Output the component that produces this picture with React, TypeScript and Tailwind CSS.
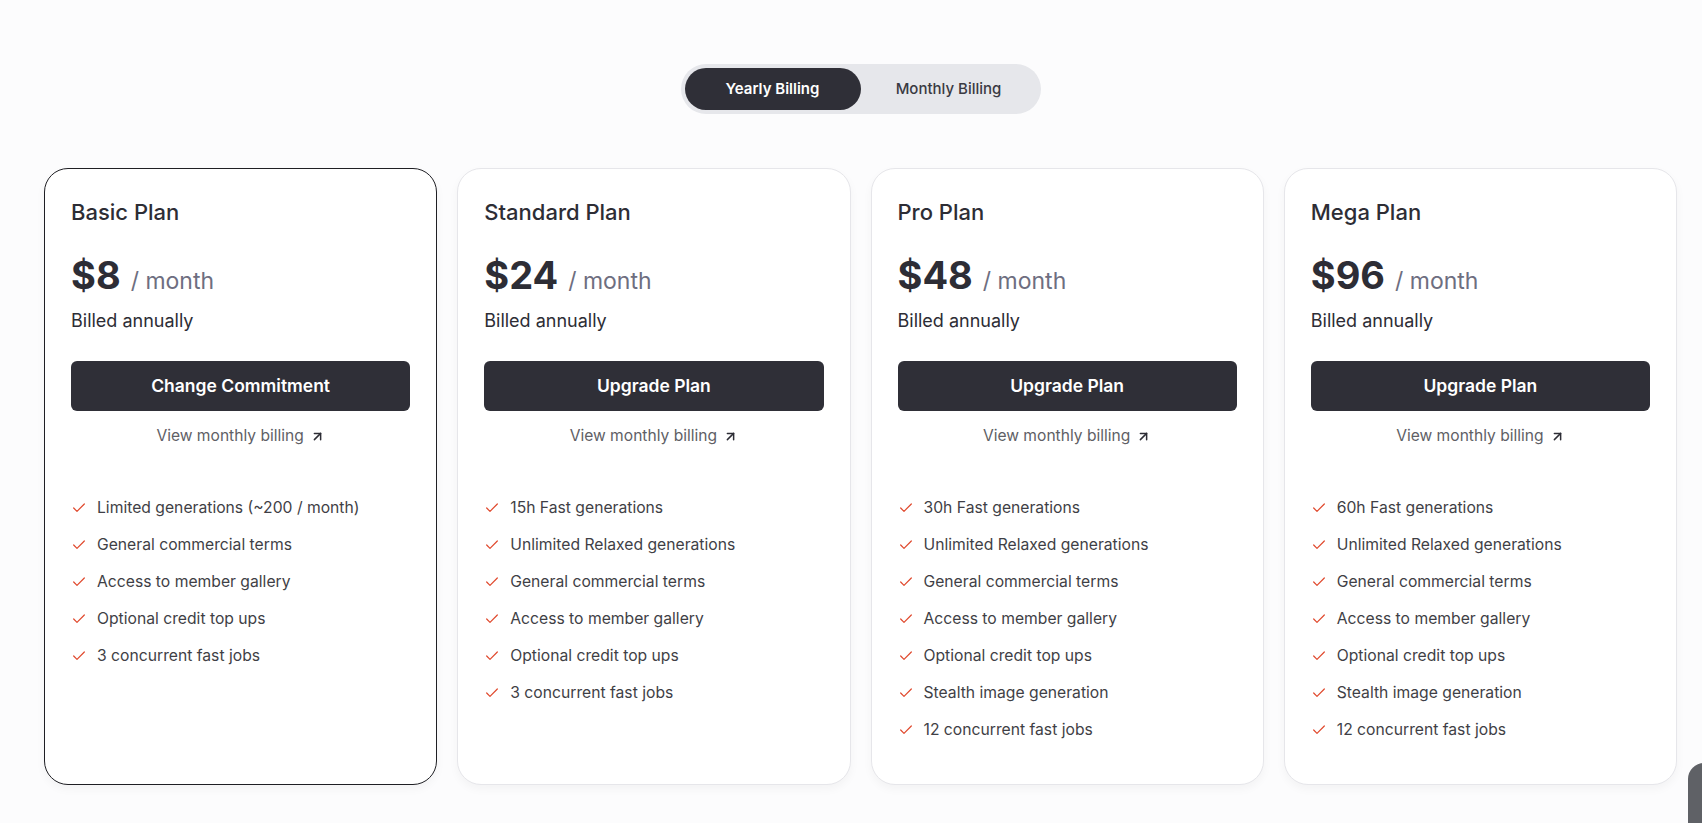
import { ArrowUpRight, Check } from 'lucide-react'

type Plan = {
  name: string
  price: string
  cta: string
  current?: boolean
  features: string[]
}

const plans: Plan[] = [
  {
    name: 'Basic Plan',
    price: '$8',
    cta: 'Change Commitment',
    current: true,
    features: [
      'Limited generations (~200 / month)',
      'General commercial terms',
      'Access to member gallery',
      'Optional credit top ups',
      '3 concurrent fast jobs',
    ],
  },
  {
    name: 'Standard Plan',
    price: '$24',
    cta: 'Upgrade Plan',
    features: [
      '15h Fast generations',
      'Unlimited Relaxed generations',
      'General commercial terms',
      'Access to member gallery',
      'Optional credit top ups',
      '3 concurrent fast jobs',
    ],
  },
  {
    name: 'Pro Plan',
    price: '$48',
    cta: 'Upgrade Plan',
    features: [
      '30h Fast generations',
      'Unlimited Relaxed generations',
      'General commercial terms',
      'Access to member gallery',
      'Optional credit top ups',
      'Stealth image generation',
      '12 concurrent fast jobs',
    ],
  },
  {
    name: 'Mega Plan',
    price: '$96',
    cta: 'Upgrade Plan',
    features: [
      '60h Fast generations',
      'Unlimited Relaxed generations',
      'General commercial terms',
      'Access to member gallery',
      'Optional credit top ups',
      'Stealth image generation',
      '12 concurrent fast jobs',
    ],
  },
]

function PlanCard({ plan }: { plan: Plan }) {
  return (
    <div
      className={`flex flex-col rounded-3xl border bg-white px-[26px] pt-[29px] pb-[42px] shadow-[0_4px_10px_rgba(0,0,0,0.04)] ${
        plan.current ? 'border-[#1f1f24]' : 'border-[#e6e6ea]'
      }`}
    >
      <h3 className="text-[22px] leading-[28px] font-medium text-[#2d2d35]">{plan.name}</h3>

      <div className="mt-[30px] flex items-baseline gap-[10px]">
        <span className="text-[38px] leading-[38px] font-bold text-[#2d2d35]">{plan.price}</span>
        <span className="text-[23px] leading-[38px] text-[#6e6e80]">/ month</span>
      </div>

      <p className="mt-[8px] text-[18px] leading-[26px] text-[#2d2d35]">Billed annually</p>

      <button className="mt-[27px] h-[50px] w-full rounded-md bg-[#2f2f37] text-[17.5px] font-semibold text-white">
        {plan.cta}
      </button>

      <a className="mt-[13px] flex items-center justify-center gap-[6px] text-[15.6px] leading-[24px] text-[#5f5f66]">
        View monthly billing
        <ArrowUpRight size={15} strokeWidth={2.4} className="text-[#2d2d35]" />
      </a>

      <ul className="mt-[48px] flex flex-col gap-[13px]">
        {plan.features.map((f) => (
          <li key={f} className="flex items-center gap-[10px] text-[15.7px] leading-[24px] text-[#3f3f46]">
            <Check size={16} strokeWidth={1.8} className="shrink-0 text-[#e0482c]" />
            {f}
          </li>
        ))}
      </ul>
    </div>
  )
}

export default function App() {
  return (
    <div
      className="relative min-h-[823px] bg-[#fcfcfd] pt-16 pl-[44px] pr-[25px]"
      style={{ fontFamily: 'Inter, "Noto Sans", sans-serif' }}
    >
      <div className="flex justify-center">
        <div className="flex rounded-full bg-[#e6e7eb] p-1">
          <button className="h-[42px] w-[176px] rounded-full bg-[#2f2f37] text-[15px] font-semibold text-white">
            Yearly Billing
          </button>
          <button className="h-[42px] w-[176px] rounded-full text-[15px] font-medium text-[#3a3a42]">
            Monthly Billing
          </button>
        </div>
      </div>

      <div className="mt-[54px] grid grid-cols-4 gap-5">
        {plans.map((p) => (
          <PlanCard key={p.name} plan={p} />
        ))}
      </div>

      <div className="fixed top-[763px] left-[1688px] h-[80px] w-[40px] rounded-[16px] bg-[#5f6166]" />
    </div>
  )
}
